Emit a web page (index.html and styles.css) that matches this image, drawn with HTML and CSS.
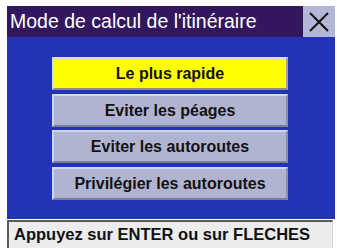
FILE: index.html
```html
<!DOCTYPE html>
<html>
<head>
<meta charset="utf-8">
<link rel="stylesheet" href="styles.css">
</head>
<body>
<div class="frame">
  <div class="titlebar">
    <div class="title">Mode de calcul de l'itinéraire</div>
    <div class="close">
      <svg width="20" height="20" viewBox="0 0 20 20"><path d="M1 1 L19 19 M19 1 L1 19" stroke="#111" stroke-width="2" fill="none"/></svg>
    </div>
  </div>
  <div class="panel">
    <div class="btn active">Le plus rapide</div>
    <div class="btn">Eviter les péages</div>
    <div class="btn">Eviter les autoroutes</div>
    <div class="btn">Privilégier les autoroutes</div>
  </div>
  <div class="status">Appuyez sur ENTER ou sur FLECHES</div>
</div>
</body>
</html>
```
FILE: styles.css
```css
html, body {
  margin: 0;
  padding: 0;
  background: #ffffff;
  overflow: hidden;
}
body {
  width: 337px;
  height: 248px;
  font-family: "Liberation Sans", Arial, sans-serif;
}
.frame {
  margin: 6px 0 0 7px;
  width: 328px;
}
.titlebar {
  display: flex;
  height: 31px;
  background: #33175e;
}
.title {
  flex: 1;
  color: #ffffff;
  font-size: 19.5px;
  line-height: 31px;
  padding-left: 3px;
  white-space: nowrap;
}
.close {
  width: 32px;
  background: #b3b6d6;
  display: flex;
  align-items: center;
  justify-content: center;
}
.panel {
  background: #2234b6;
  height: 182px;
  padding: 20px 0 0 45px;
  box-sizing: border-box;
  display: flex;
  flex-direction: column;
  gap: 3.7px;
}
.btn {
  width: 236px;
  height: 33px;
  box-sizing: border-box;
  background: #b1b4d0;
  border-top: 2px solid #d4d6ec;
  border-left: 2px solid #d4d6ec;
  border-bottom: 2px solid #7a7d9c;
  border-right: 2px solid #8a8dab;
  font-weight: bold;
  font-size: 16px;
  line-height: 29px;
  text-align: center;
  color: #111111;
}
.btn.active {
  background: #ffff00;
  border-top-color: #d8daf0;
  border-left-color: #d8daf0;
  border-bottom-color: #8e8f7a;
  border-right-color: #a0a0a0;
}
.status {
  margin-top: 1px;
  width: 326px;
  height: 30px;
  box-sizing: border-box;
  background: #ececec;
  border-top: 2px solid #5a5a5a;
  border-left: 2px solid #5a5a5a;
  border-right: 1px solid #d8d8d8;
  padding-left: 5px;
  font-weight: bold;
  font-size: 16.5px;
  line-height: 24px;
  color: #111111;
  white-space: nowrap;
}
```
